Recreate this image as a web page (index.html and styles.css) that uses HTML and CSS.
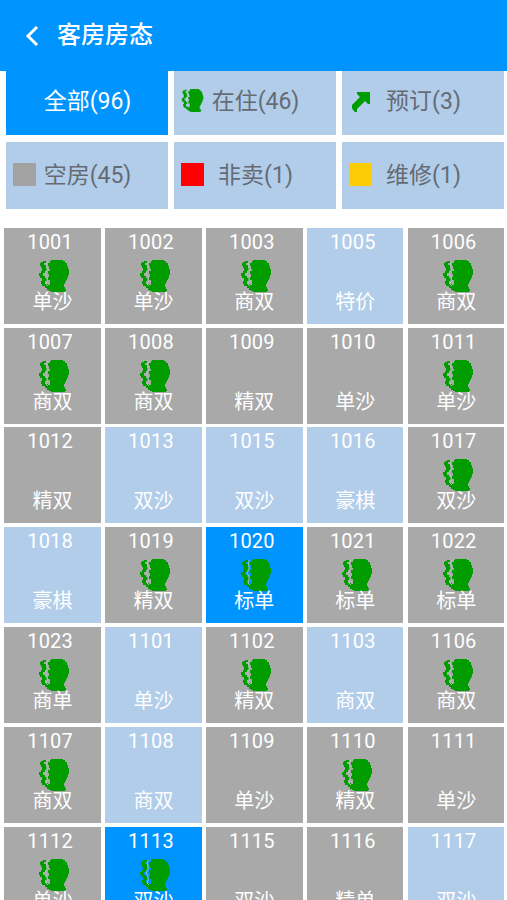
FILE: index.html
```
<!DOCTYPE html>
<html lang="zh-CN">
  <head>
    <meta charset="UTF-8" />
    <meta name="viewport" content="width=device-width, initial-scale=1.0" />
    <title>客房房态</title>
    <link rel="stylesheet" href="styles.css">
  </head>
  <body>
    <svg class="defs" width="0" height="0">
      <symbol id="guest" viewBox="0 0 30 32">
        <path d="M12 0h12v1h2v2h2v3h1v3h1v6h-1v3h-1v2h-1v2h-1v2h-1v3h1v2h1v2h-1v1H12v-1h-2v-3H9v-3h2v-5H9v-3h1v-3H9v-3h2V9h-1V6H9V3h2V1h1z"/>
        <path d="M2 2h2V1h3v2H5v2h2v3h1v3H6v2H4v3h2v2h2v3H6v3h3v3h2v3H8v-2H6v-2H3v-2H2v-3h1v-3H1v-2H0v-3h2v-2h1V8H2V6H1V3h1z"/>
        <path class="gap" d="M9 1L7 3l1 4v3l-2 4 2 3v4l-1 3 2 2"/>
      </symbol>
      <symbol id="arrow" viewBox="0 0 18 20">
        <path d="M5 0h13v12h-2l-3-3-5 5-3 3v3H3l-2-2-1-2v-3l4-4 4-4-3-3z"/>
      </symbol>
    </svg>

    <header class="topbar">
      <svg class="back" viewBox="0 0 14 22"><path d="M12 2L3 11l9 9"/></svg>
      <h1>客房房态</h1>
    </header>

    <div class="filters">
      <button class="filter active"><span class="mark"></span><span class="name">全部(96)</span></button>
      <button class="filter"><svg class="mark"><use href="#guest"/></svg><span class="name">在住(46)</span></button>
      <button class="filter"><svg class="mark arrow"><use href="#arrow"/></svg><span class="name">预订(3)</span></button>
      <button class="filter low"><span class="mark vacant"></span><span class="name">空房(45)</span></button>
      <button class="filter low"><span class="mark closed"></span><span class="name">非卖(1)</span></button>
      <button class="filter low"><span class="mark repair"></span><span class="name">维修(1)</span></button>
    </div>

    <div class="rooms" id="rooms"></div>

    <script>
      // number, type, background (gray / light / blue), 1 = guest in the room
      var rooms = [
        ["1001", "单沙", "gray", 1], ["1002", "单沙", "gray", 1], ["1003", "商双", "gray", 1], ["1005", "特价", "light", 0], ["1006", "商双", "gray", 1],
        ["1007", "商双", "gray", 1], ["1008", "商双", "gray", 1], ["1009", "精双", "gray", 0], ["1010", "单沙", "gray", 0], ["1011", "单沙", "gray", 1],
        ["1012", "精双", "gray", 0], ["1013", "双沙", "light", 0], ["1015", "双沙", "light", 0], ["1016", "豪棋", "light", 0], ["1017", "双沙", "gray", 1],
        ["1018", "豪棋", "light", 0], ["1019", "精双", "gray", 1], ["1020", "标单", "blue", 1], ["1021", "标单", "gray", 1], ["1022", "标单", "gray", 1],
        ["1023", "商单", "gray", 1], ["1101", "单沙", "light", 0], ["1102", "精双", "gray", 1], ["1103", "商双", "light", 0], ["1106", "商双", "gray", 1],
        ["1107", "商双", "gray", 1], ["1108", "商双", "light", 0], ["1109", "单沙", "gray", 0], ["1110", "精双", "gray", 1], ["1111", "单沙", "gray", 0],
        ["1112", "单沙", "gray", 1], ["1113", "双沙", "blue", 1], ["1115", "双沙", "gray", 0], ["1116", "精单", "gray", 0], ["1117", "双沙", "light", 0]
      ];
      var html = "";
      rooms.forEach(function (r) {
        html += '<div class="room ' + r[2] + '"><span class="number">' + r[0] + '</span>';
        if (r[3]) {
          html += '<svg class="guest"><use href="#guest"/></svg>';
        }
        html += '<span class="type">' + r[1] + '</span></div>';
      });
      document.getElementById("rooms").innerHTML = html;
    </script>
  </body>
</html>
```
FILE: styles.css
```
* {
  box-sizing: border-box;
}
body {
  margin: 0;
  height: 900px;
  overflow: hidden;
  background: #fff;
  font-family: Roboto, "Noto Sans CJK SC", sans-serif;
}
.defs {
  position: absolute;
}
.topbar {
  display: flex;
  align-items: center;
  height: 71px;
  padding: 0 0 1px 25px;
  background: #0094ff;
  color: #fff;
}
.back {
  width: 14px;
  height: 22px;
  margin-top: 2px;
  fill: none;
  stroke: #fff;
  stroke-width: 3;
}
.topbar h1 {
  margin: 0 0 0 18px;
  font-size: 24px;
  font-weight: 500;
  line-height: 30px;
}
.filters {
  display: grid;
  grid-template-columns: repeat(3, 162px);
  grid-template-rows: 63.5px 67.5px;
  column-gap: 6px;
  row-gap: 7px;
  padding-left: 6px;
}
.filter {
  display: flex;
  align-items: center;
  border: none;
  padding: 0 0 5px 7px;
  background: #b1cdea;
  color: #666b73;
  font-family: inherit;
  font-size: 23px;
}
.filter.low {
  padding-bottom: 1px;
}
.filter.active {
  background: #0094ff;
  color: #fff;
}
.mark {
  flex: none;
  width: 23px;
  height: 23px;
  fill: #009c00;
}
.mark.arrow {
  width: 18px;
  height: 20px;
  margin: 3px 2px 0 3px;
}
.name {
  width: 103px;
  padding-top: 3px;
  text-align: center;
  line-height: 30px;
}
.vacant {
  background: #a2a2a2;
}
.closed {
  background: #f00;
}
.repair {
  background: #fccd06;
}
.gap {
  fill: none;
  stroke: #a9c4ae;
  stroke-width: 1;
}
.rooms {
  display: grid;
  grid-template-columns: repeat(5, 96.4px);
  grid-auto-rows: 96px;
  column-gap: 4.5px;
  row-gap: 3.8px;
  padding: 18.8px 0 0 4.4px;
}
.room {
  display: grid;
  grid-template-rows: 32px 28px 36px;
  justify-items: center;
  color: #fff;
}
.gray {
  background: #a9a9a9;
}
.light {
  background: #b1cdea;
}
.blue {
  background: #0094ff;
}
.blue .gap {
  stroke: #1a99a8;
}
.number {
  padding-right: 5px;
  font-size: 20px;
  line-height: 29px;
  letter-spacing: 0.2px;
}
.guest {
  grid-row: 2;
  width: 30px;
  height: 32px;
  margin-left: 3px;
  fill: #009c00;
}
.type {
  z-index: 1;
  grid-row: 3;
  font-size: 20px;
  line-height: 29px;
}
```
